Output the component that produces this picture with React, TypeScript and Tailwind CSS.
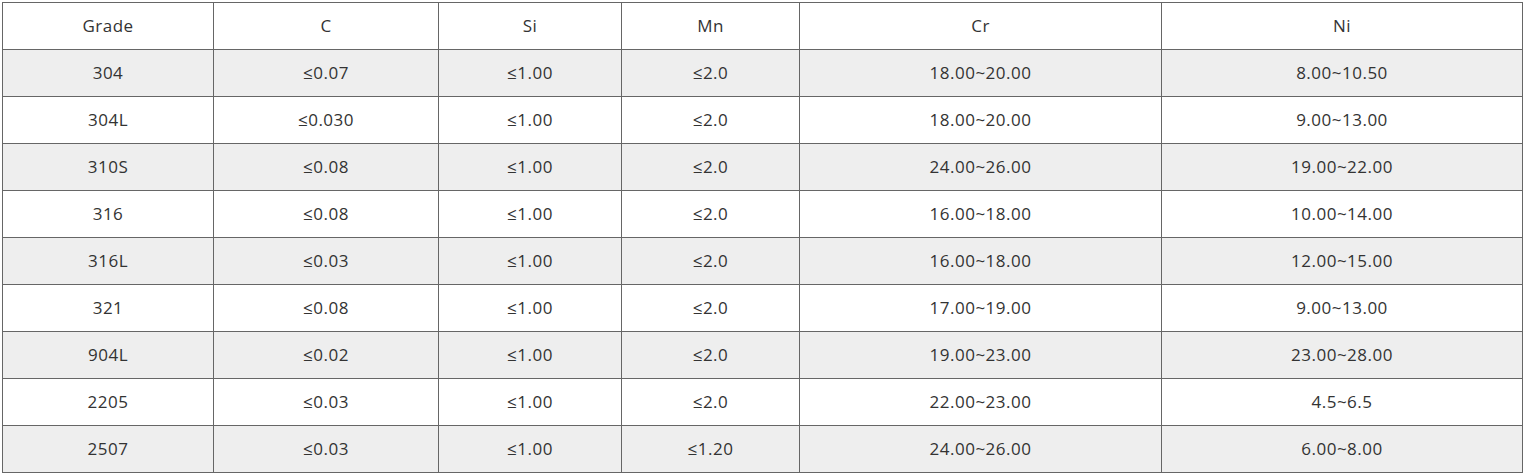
import React from "react";

const header = ["Grade", "C", "Si", "Mn", "Cr", "Ni"];
const rows = [
  ["304", "≤0.07", "≤1.00", "≤2.0", "18.00~20.00", "8.00~10.50"],
  ["304L", "≤0.030", "≤1.00", "≤2.0", "18.00~20.00", "9.00~13.00"],
  ["310S", "≤0.08", "≤1.00", "≤2.0", "24.00~26.00", "19.00~22.00"],
  ["316", "≤0.08", "≤1.00", "≤2.0", "16.00~18.00", "10.00~14.00"],
  ["316L", "≤0.03", "≤1.00", "≤2.0", "16.00~18.00", "12.00~15.00"],
  ["321", "≤0.08", "≤1.00", "≤2.0", "17.00~19.00", "9.00~13.00"],
  ["904L", "≤0.02", "≤1.00", "≤2.0", "19.00~23.00", "23.00~28.00"],
  ["2205", "≤0.03", "≤1.00", "≤2.0", "22.00~23.00", "4.5~6.5"],
  ["2507", "≤0.03", "≤1.00", "≤1.20", "24.00~26.00", "6.00~8.00"],
];

export default function App() {
  return (
    <div className="bg-white w-[1524px] h-[475px] pt-[2px] pl-[2px]" style={{ fontFamily: '"Open Sans", sans-serif' }}>
      <table className="border-collapse table-fixed w-[1520px] text-[17px] tracking-[0.5px] text-[#333]">
        <colgroup>
          <col className="w-[211px]" />
          <col className="w-[225px]" />
          <col className="w-[183px]" />
          <col className="w-[178px]" />
          <col className="w-[362px]" />
          <col className="w-[361px]" />
        </colgroup>
        <tbody>
          <tr className="h-[47px] bg-white">
            {header.map((h) => (
              <td key={h} className="border border-[#666] text-center p-0 align-middle">
                {h}
              </td>
            ))}
          </tr>
          {rows.map((r, i) => (
            <tr key={i} className={`h-[47px] ${i % 2 === 0 ? "bg-[#eeeeee]" : "bg-white"}`}>
              {r.map((c, j) => (
                <td key={j} className="border border-[#666] text-center p-0 align-middle">
                  {c}
                </td>
              ))}
            </tr>
          ))}
        </tbody>
      </table>
    </div>
  );
}
